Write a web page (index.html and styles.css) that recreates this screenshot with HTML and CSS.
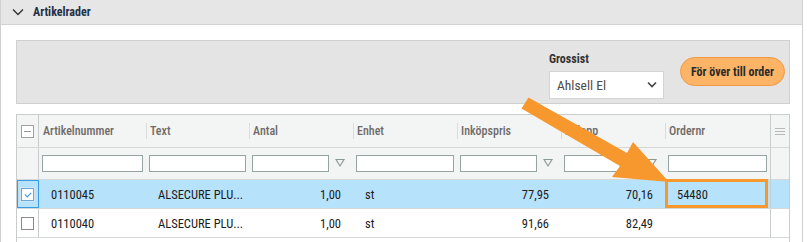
FILE: index.html
```html
<!DOCTYPE html>
<html lang="sv">
<head>
  <meta charset="UTF-8" />
  <title>Artikelrader</title>
  <link rel="stylesheet" href="styles.css">
</head>
<body>

<div class="panel">
  <div class="panel-head">
    <svg class="chev" width="12" height="8" viewBox="0 0 12 8"><path d="M1 1.5 L6 6.5 L11 1.5" fill="none" stroke="#333" stroke-width="1.4"/></svg>
    <span class="panel-title">Artikelrader</span>
  </div>

  <div class="panel-body">
    <div class="toolbar">
      <div class="field">
        <label class="field-label">Grossist</label>
        <div class="select">
          <span>Ahlsell El</span>
          <svg width="10" height="7" viewBox="0 0 10 7"><path d="M1 1.5 L5 5.5 L9 1.5" fill="none" stroke="#444" stroke-width="1.6"/></svg>
        </div>
      </div>
      <button class="btn-order">För över till order</button>
    </div>

    <div class="grid">
      <div class="row head">
        <div class="cell chk"><span class="box minus"></span></div>
        <div class="cell">Artikelnummer</div>
        <div class="cell sep">Text</div>
        <div class="cell sep">Antal</div>
        <div class="cell sep">Enhet</div>
        <div class="cell sep">Inköpspris</div>
        <div class="cell sep">Belopp</div>
        <div class="cell sep">Ordernr</div>
        <div class="cell menu"><span class="menu-icon"></span></div>
      </div>

      <div class="row filter">
        <div class="cell chk"></div>
        <div class="cell"><span class="inp"></span></div>
        <div class="cell"><span class="inp"></span></div>
        <div class="cell"><span class="inp"></span><span class="funnel"></span></div>
        <div class="cell"><span class="inp"></span></div>
        <div class="cell"><span class="inp"></span><span class="funnel"></span></div>
        <div class="cell"><span class="inp"></span><span class="funnel"></span></div>
        <div class="cell"><span class="inp"></span></div>
        <div class="cell menu"></div>
      </div>

      <div class="row data selected">
        <div class="cell chk focus"><span class="box checked"></span></div>
        <div class="cell">0110045</div>
        <div class="cell">ALSECURE PLU...</div>
        <div class="cell num">1,00</div>
        <div class="cell">st</div>
        <div class="cell num">77,95</div>
        <div class="cell num">70,16</div>
        <div class="cell">54480</div>
        <div class="cell menu"></div>
      </div>

      <div class="row data">
        <div class="cell chk"><span class="box"></span></div>
        <div class="cell">0110040</div>
        <div class="cell">ALSECURE PLU...</div>
        <div class="cell num">1,00</div>
        <div class="cell">st</div>
        <div class="cell num">91,66</div>
        <div class="cell num">82,49</div>
        <div class="cell"></div>
        <div class="cell menu"></div>
      </div>
    </div>
  </div>
</div>

<!-- annotation drawn over the screenshot -->
<svg class="annot" width="807" height="242" viewBox="0 0 807 242">
  <polygon points="521.5,108.5 528.5,97.5 627,153 633,142 669,182 612,177 620,166" fill="#f7982f"/>
  <rect x="666.5" y="180.5" width="100" height="26" fill="none" stroke="#f7982f" stroke-width="3"/>
</svg>

</body>
</html>
```

FILE: styles.css
```css
body {
  margin: 0;
  font-family: "Roboto Condensed", "DejaVu Sans Condensed", "Liberation Sans Narrow", Roboto, sans-serif;
  font-size: 12.5px;
  color: #1b1b1b;
  background: #fff;
  position: relative;
  width: 807px;
  height: 242px;
  overflow: hidden;
}
.panel {
  width: 801px;
  border-left: 1px solid #cfcfcf;
  border-right: 1px solid #cfcfcf;
  height: 242px;
  overflow: hidden;
}
.panel-head {
  height: 24px;
  background: #e6e6e6;
  border-bottom: 1px solid #d2d2d2;
  display: flex;
  align-items: center;
  padding-left: 11px;
}
.chev {
  margin-right: 9px;
}
.panel-title {
  font-weight: bold;
  color: #22304a;
  font-size: 12px;
}
.panel-body {
  padding: 15px 12px 0 15px;
}
.toolbar {
  height: 62px;
  background: #e4e4e4;
  border: 1px solid #d0d0d0;
  display: flex;
  justify-content: flex-end;
  align-items: center;
  padding-right: 4px;
}
.field {
  display: flex;
  flex-direction: column;
  margin-right: 16px;
  margin-top: 6px;
}
.field-label {
  font-weight: bold;
  font-size: 12px;
  color: #333;
  margin-bottom: 5px;
}
.select {
  height: 26px;
  background: #fff;
  border: 1px solid #d4d4d4;
  display: flex;
  align-items: center;
  justify-content: space-between;
  padding: 0 6px 0 7px;
  width: 100px;
  font-size: 13.5px;
  color: #4a4a4a;
}
.btn-order {
  height: 29px;
  width: 105px;
  padding: 0;
  border-radius: 15px;
  background: #fdb466;
  border: 1px solid #f09a45;
  color: #2a2a2a;
  font-family: inherit;
  font-weight: bold;
  font-size: 12px;
  margin-top: -1px;
}
.grid {
  margin-top: 10px;
  border: 1px solid #c8cccc;
  height: 140px;
}
.row {
  display: grid;
  grid-template-columns: 22px 107px 103px 104px 104px 104px 104px 105px 1fr;
  border-bottom: 1px solid #d4d8d8;
}
.cell {
  display: flex;
  align-items: center;
  padding: 0 12px;
  white-space: nowrap;
  position: relative;
}
.cell.chk {
  padding: 0;
  justify-content: center;
  border-right: 1px solid #c8cccc;
}
.cell.menu {
  padding: 0;
  justify-content: center;
  border-left: 1px solid #c8cccc;
}
.head {
  height: 32px;
  background: #f3f4f4;
  color: #6e6a68;
  font-weight: 500;
  font-size: 12px;
}
.head .cell {
  padding-left: 4px;
}
.head .cell.chk, .head .cell.menu {
  padding: 0;
}
.head .sep::before {
  content: "";
  position: absolute;
  left: 0;
  top: 8px;
  height: 16px;
  border-left: 1px solid #dcdcdc;
}
.filter {
  height: 31px;
  background: #f3f4f4;
}
.filter .cell {
  padding: 0 3px 0 3px;
}
.filter .cell.chk, .filter .cell.menu {
  padding: 0;
}
.inp {
  flex: 1;
  height: 15px;
  background: #fff;
  border: 1px solid #96a3a3;
}
.funnel {
  width: 20px;
  height: 12px;
  margin-left: 1px;
  position: relative;
}
.funnel::before {
  content: "";
  position: absolute;
  left: 5px;
  top: 1px;
  width: 0;
  height: 0;
  border-left: 5px solid transparent;
  border-right: 5px solid transparent;
  border-top: 8px solid #8c9999;
}
.funnel::after {
  content: "";
  position: absolute;
  left: 7px;
  top: 2px;
  width: 0;
  height: 0;
  border-left: 3px solid transparent;
  border-right: 3px solid transparent;
  border-top: 5px solid #f3f4f4;
}
.data {
  height: 28px;
  background: #fff;
}
.data .cell.num {
  justify-content: flex-end;
}
.selected {
  background: #b6e2fb;
}
.cell.focus {
  outline: 1px solid #3a9be0;
  outline-offset: -1px;
}
.box {
  width: 11px;
  height: 11px;
  border: 1px solid #8a8a8a;
  background: #fff;
  position: relative;
}
.box.minus {
  border-color: #a0a0a0;
}
.box.minus::after {
  content: "";
  position: absolute;
  left: 2px;
  top: 5px;
  width: 7px;
  border-top: 1px solid #999;
}
.box.checked {
  border-color: #6aa8d8;
  box-shadow: 0 0 0 1px #cfe6f7;
}
.box.checked::after {
  content: "";
  position: absolute;
  left: 3px;
  top: 1px;
  width: 5px;
  height: 3px;
  border-left: 1px solid #3b8fd0;
  border-bottom: 1px solid #3b8fd0;
  transform: translate(0, 2px) rotate(-45deg);
}
.menu-icon {
  width: 10px;
  height: 5px;
  border-top: 1px solid #b8b8b8;
  border-bottom: 1px solid #b8b8b8;
  position: relative;
}
.menu-icon::after {
  content: "";
  position: absolute;
  left: 0;
  right: 0;
  top: 2px;
  border-top: 1px solid #b8b8b8;
}
.annot {
  position: absolute;
  top: 0;
  left: 0;
  pointer-events: none;
}
```
